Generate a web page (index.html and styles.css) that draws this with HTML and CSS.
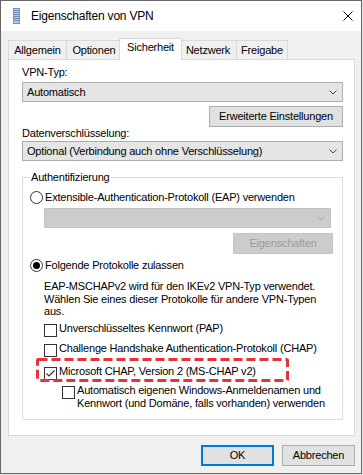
FILE: index.html
```html
<!DOCTYPE html>
<html lang="de">
<head>
    <meta charset="UTF-8">
    <meta name="viewport" content="width=device-width, initial-scale=1.0">
    <title>Eigenschaften von VPN</title>
    <link rel="stylesheet" href="styles.css">
</head>
<body>

    <div class="window">

        <!-- Title Bar -->
        <div class="titlebar">
            <svg class="app-icon" width="7" height="16" viewBox="0 0 7 16">
                <rect x="0.5" y="0.5" width="6" height="15" fill="#b7cbe4" stroke="#7694bb"/>
                <path d="M1 2.5h5M1 4.5h5M1 6.5h5M1 8.5h5M1 10.5h5M1 12.5h5" stroke="#6d8fbb" stroke-width="1"/>
            </svg>
            <span class="title">Eigenschaften von VPN</span>
            <svg class="close" width="10" height="10" viewBox="0 0 10 10">
                <path d="M0.5 0.5l9 9M9.5 0.5l-9 9" stroke="#000" stroke-width="1"/>
            </svg>
        </div>

        <div class="dialog">

            <!-- Tabs -->
            <div class="tabs">
                <div class="tab tab-allgemein">Allgemein</div>
                <div class="tab tab-optionen">Optionen</div>
                <div class="tab tab-active">Sicherheit</div>
                <div class="tab tab-netzwerk">Netzwerk</div>
                <div class="tab tab-freigabe">Freigabe</div>
            </div>

            <!-- Sicherheit Panel -->
            <div class="panel">
                <div class="label">VPN-Typ:</div>
                <div class="combo combo-first">
                    <span>Automatisch</span>
                    <svg class="chevron" width="8" height="5" viewBox="0 0 8 5"><polyline points="0.5,0.5 4,4 7.5,0.5" fill="none" stroke="#444" stroke-width="1"/></svg>
                </div>
                <div class="button-row">
                    <button class="btn btn-advanced">Erweiterte Einstellungen</button>
                </div>
                <div class="label label-data">Datenverschlüsselung:</div>
                <div class="combo combo-data">
                    <span>Optional (Verbindung auch ohne Verschlüsselung)</span>
                    <svg class="chevron" width="8" height="5" viewBox="0 0 8 5"><polyline points="0.5,0.5 4,4 7.5,0.5" fill="none" stroke="#444" stroke-width="1"/></svg>
                </div>

                <fieldset class="group">
                    <legend>Authentifizierung</legend>

                    <div class="radio-row radio-eap">
                        <span class="radio"></span>
                        <span>Extensible-Authentication-Protokoll (EAP) verwenden</span>
                    </div>
                    <div class="combo combo-disabled">
                        <svg class="chevron" width="8" height="5" viewBox="0 0 8 5"><polyline points="0.5,0.5 4,4 7.5,0.5" fill="none" stroke="#a3a3a3" stroke-width="1"/></svg>
                    </div>
                    <div class="button-row">
                        <button class="btn btn-disabled" disabled>Eigenschaften</button>
                    </div>

                    <div class="radio-row radio-protocols">
                        <span class="radio radio-on"></span>
                        <span>Folgende Protokolle zulassen</span>
                    </div>
                    <p class="hint">EAP-MSCHAPv2 wird für den IKEv2 VPN-Typ verwendet.<br>Wählen Sie eines dieser Protokolle für andere VPN-Typen<br>aus.</p>

                    <div class="check-row check-pap">
                        <span class="check"></span>
                        <span>Unverschlüsseltes Kennwort (PAP)</span>
                    </div>
                    <div class="check-row check-chap">
                        <span class="check"></span>
                        <span>Challenge Handshake Authentication-Protokoll (CHAP)</span>
                    </div>
                    <div class="check-row check-mschap">
                        <span class="check">
                            <svg width="11" height="11" viewBox="0 0 11 11"><polyline points="1.5,5.5 4,8 9.5,2.5" fill="none" stroke="#333" stroke-width="1.2"/></svg>
                        </span>
                        <span>Microsoft CHAP, Version 2 (MS-CHAP v2)</span>
                        <!-- red annotation frame -->
                        <svg class="highlight" width="253" height="24" viewBox="0 0 253 24">
                            <rect x="1.5" y="1.5" width="250" height="21" rx="1" fill="none" stroke="#e6323b" stroke-width="3" stroke-dasharray="9 4"/>
                        </svg>
                    </div>
                    <div class="check-row check-auto">
                        <span class="check"></span>
                        <span>Automatisch eigenen Windows-Anmeldenamen und<br>Kennwort (und Domäne, falls vorhanden) verwenden</span>
                    </div>
                </fieldset>
            </div>

            <!-- Dialog Buttons -->
            <div class="actions">
                <button class="btn btn-default">OK</button>
                <button class="btn">Abbrechen</button>
            </div>
        </div>
    </div>

</body>
</html>
```

FILE: styles.css
```css
/* Page */
body {
    margin: 0;
    background: #e6e6e6;
    font-family: "Liberation Sans", Arial, sans-serif;
    font-size: 11px;
    letter-spacing: -0.2px;
    color: #000;
}

/* Window Frame */
.window {
    width: 362px;
    height: 474px;
    box-sizing: border-box;
    border: 1px solid #666;
    background: #f0f0f0;
    display: flex;
    flex-direction: column;
}

/* Title Bar */
.titlebar {
    height: 30px;
    flex: none;
    background: #fff;
    display: flex;
    align-items: center;
    padding-left: 12px;
}

.title {
    margin-left: 11px;
    font-size: 12px;
}

.close {
    margin-left: auto;
    margin-right: 8px;
}

/* Dialog Body */
.dialog {
    flex: 1;
    padding: 7px 6px 0 7px;
    display: flex;
    flex-direction: column;
}

/* Tabs */
.tabs {
    display: flex;
    align-items: flex-end;
    height: 21px;
}

.tab {
    box-sizing: border-box;
    height: 19px;
    padding-top: 3px;
    line-height: 13px;
    text-align: center;
    border: 1px solid #d9d9d9;
    border-bottom: none;
    background: #f0f0f0;
    margin-right: -1px;
    white-space: nowrap;
}

.tab-allgemein { width: 59px; }
.tab-optionen { width: 56px; margin-right: -3px; }
.tab-netzwerk { width: 58px; }
.tab-freigabe { width: 52px; }

.tab-active {
    width: 63px;
    height: 22px;
    padding-top: 2px;
    margin-right: -3px;
    margin-bottom: -1px;
    background: #fff;
    position: relative;
    z-index: 1;
}

/* Tab Panel */
.panel {
    box-sizing: border-box;
    height: 377px;
    flex: none;
    border: 1px solid #d9d9d9;
    background: #fff;
    padding: 6px 11px 0 13px;
    display: flex;
    flex-direction: column;
}

.label {
    line-height: 13px;
}

/* Combo Boxes */
.combo {
    box-sizing: border-box;
    height: 20px;
    border: 1px solid #adadad;
    background: #e5e5e5;
    display: flex;
    align-items: center;
    padding-left: 4px;
    line-height: 13px;
    white-space: nowrap;
}

.combo .chevron {
    margin-left: auto;
    margin-right: 5px;
    flex: none;
}

.combo-first { margin-top: 3px; }
.combo-data { margin-top: 1px; }

.combo-disabled {
    margin: 4px 11px 0 14px;
    background: #cccccc;
    border-color: #c4c4c4;
}

/* Buttons */
.button-row {
    display: flex;
    justify-content: flex-end;
}

.btn {
    box-sizing: border-box;
    height: 21px;
    padding: 0;
    border: 1px solid #adadad;
    background: #e1e1e1;
    font: inherit;
    letter-spacing: inherit;
    color: #000;
    line-height: 13px;
    white-space: nowrap;
}

.btn-advanced {
    width: 134px;
    margin-top: 4px;
}

.btn-disabled {
    width: 100px;
    margin: 5px 9px 0 0;
    background: #cccccc;
    border-color: #c4c4c4;
    color: #9c9c9c;
}

/* Group Box */
.group {
    margin: 10px 0 0 0;
    padding: 0 0 9px 7px;
    border: 1px solid #dcdcdc;
    min-width: 0;
}

.group legend {
    padding: 0 1px;
    line-height: 13px;
}

/* Radio Buttons */
.radio-row {
    display: flex;
    align-items: center;
    height: 13px;
    line-height: 13px;
    gap: 2px;
    white-space: nowrap;
}

.radio-eap { margin-top: 7px; }
.radio-protocols { margin-top: 5px; }

.radio {
    box-sizing: border-box;
    width: 13px;
    height: 13px;
    flex: none;
    border: 1px solid #333;
    border-radius: 50%;
    background: #fff;
}

.radio-on::after {
    content: "";
    display: block;
    width: 7px;
    height: 7px;
    margin: 2px;
    border-radius: 50%;
    background: #000;
}

/* Hint Text */
.hint {
    margin: 8px 0 0 14px;
    line-height: 12.5px;
    white-space: nowrap;
}

/* Checkboxes */
.check-row {
    display: flex;
    align-items: flex-start;
    gap: 2px;
    margin-left: 14px;
    line-height: 13px;
    white-space: nowrap;
}

.check {
    box-sizing: border-box;
    width: 13px;
    height: 13px;
    flex: none;
    margin-top: 2px;
    border: 1px solid #333;
    background: #fff;
    display: flex;
}

.check-pap { margin-top: 4px; }
.check-chap { margin-top: 5px; }
.check-mschap { margin-top: 8px; position: relative; }
.check-auto { margin: 4px 0 0 32px; }

/* Red dashed annotation */
.highlight {
    position: absolute;
    left: -8px;
    top: -7px;
}

/* Dialog Actions */
.actions {
    display: flex;
    justify-content: flex-end;
    gap: 8px;
    margin-top: 9px;
}

.actions .btn {
    width: 73px;
}

.btn-default {
    border: 2px solid #0078d7;
}
```
